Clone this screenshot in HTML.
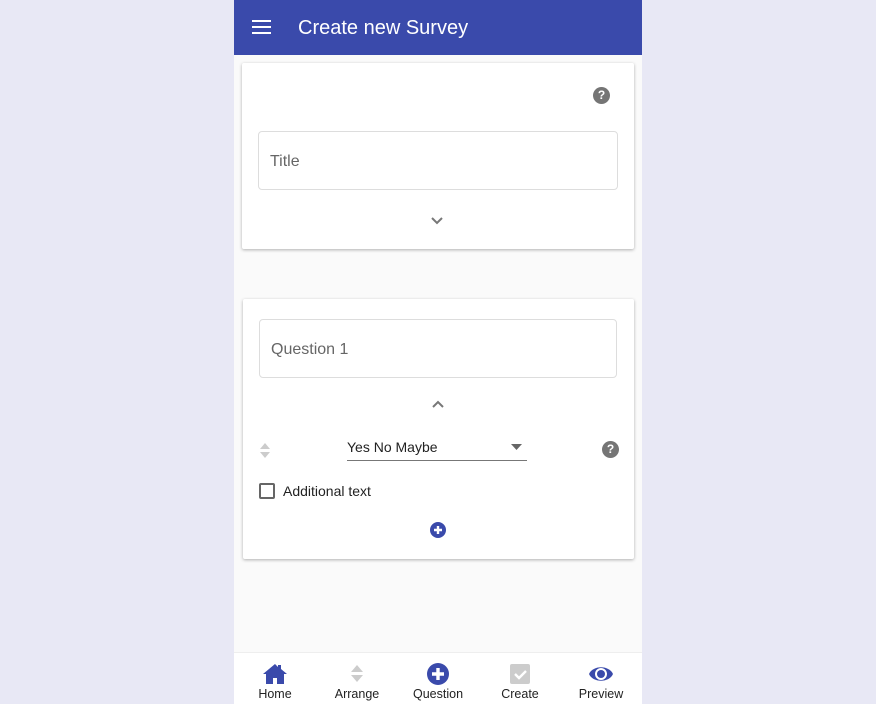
<!DOCTYPE html>
<html><head><meta charset="utf-8"><style>
*{box-sizing:border-box;margin:0;padding:0}
body{width:876px;height:704px;background:#e8e8f5;font-family:"Liberation Sans",sans-serif;position:relative;overflow:hidden}
#app{position:absolute;left:234px;top:0;width:408px;height:704px;background:#fafafa}
.bar{height:55px;background:#3a4aab;color:#fff;position:relative}
.bar .t{position:absolute;left:64px;top:17px;font-size:20px}
.ham{position:absolute;left:18px;width:19px;height:2px;background:#fff}
.card{position:absolute;background:#fff;box-shadow:0 1px 3px rgba(0,0,0,.3);border-radius:2px}
.inp{position:absolute;border:1px solid #ddd;border-radius:4px;color:#666;font-size:16px;padding-left:11px;line-height:59px}
.help{position:absolute;width:17px;height:17px;border-radius:50%;background:#757575;color:#fff;font-size:12px;font-weight:bold;text-align:center;line-height:17px}
.nav{position:absolute;left:0;top:652px;width:408px;height:52px;background:#fff;border-top:1px solid #eee}
.it{position:absolute;top:0;width:80px;text-align:center;font-size:12.5px;color:#222}
.it svg{display:block;margin:10px auto 2px}
</style></head><body>
<div id="app">
<div class="bar"><div class="ham" style="top:20px"></div><div class="ham" style="top:26px"></div><div class="ham" style="top:32px"></div><div class="t">Create new Survey</div></div>
<div class="card" style="left:8px;top:63px;width:392px;height:186px">
<div class="help" style="left:351px;top:24px">?</div>
<div class="inp" style="left:16px;top:68px;width:360px;height:59px">Title</div>
<svg style="position:absolute;left:189px;top:154px" width="12" height="8"><path d="M1 1l5 5 5-5" stroke="#777" stroke-width="2" fill="none"/></svg>
</div>
<div class="card" style="left:9px;top:299px;width:391px;height:260px">
<div class="inp" style="left:16px;top:20px;width:358px;height:59px">Question 1</div>
<svg style="position:absolute;left:189px;top:101px" width="12" height="8"><path d="M1 7l5-5 5 5" stroke="#777" stroke-width="2" fill="none"/></svg>
<svg style="position:absolute;left:16px;top:143px" width="12" height="17"><path d="M1 7L6 1l5 6zM1 10l5 6 5-6z" fill="#ccc"/></svg>
<div style="position:absolute;left:104px;top:140px;width:180px;height:22px;border-bottom:1px solid #777;font-size:14px;color:#222">Yes No Maybe</div>
<svg style="position:absolute;left:268px;top:145px" width="12" height="6"><path d="M0 0h11L5.5 6z" fill="#666"/></svg>
<div class="help" style="left:359px;top:142px">?</div>
<div style="position:absolute;left:16px;top:184px;width:16px;height:16px;border:2px solid #666;border-radius:2px"></div>
<div style="position:absolute;left:40px;top:184px;font-size:14px;color:#222">Additional text</div>
<svg style="position:absolute;left:187px;top:223px" width="16" height="16"><circle cx="8" cy="8" r="8" fill="#3a4aab"/><path d="M8 4v8M4 8h8" stroke="#fff" stroke-width="2.4"/></svg>
</div>
<div class="nav">
<div class="it" style="left:1px"><svg width="26" height="22" viewBox="0 0 26 22"><path d="M13 1L1 11h3v10h7v-6h4v6h7V11h3L19 6V2h-3v2z" fill="#3a4aab"/></svg>Home</div>
<div class="it" style="left:83px"><svg width="14" height="22"><path d="M1 9L7 2l6 7zM1 12l6 7 6-7z" fill="#ccc"/></svg>Arrange</div>
<div class="it" style="left:164px"><svg width="22" height="22"><circle cx="11" cy="11" r="11" fill="#3a4aab"/><path d="M11 5v12M5 11h12" stroke="#fff" stroke-width="3.4"/></svg>Question</div>
<div class="it" style="left:246px"><svg width="20" height="22"><rect x="0" y="1" width="20" height="20" rx="2" fill="#ccc"/><path d="M5 11l4 4 7-7" stroke="#fff" stroke-width="2.4" fill="none"/></svg>Create</div>
<div class="it" style="left:327px"><svg width="26" height="22" viewBox="0 0 26 22"><path d="M1 11C5 2 21 2 25 11 21 20 5 20 1 11z" fill="#3a4aab"/><circle cx="13" cy="11" r="6" fill="#fff"/><circle cx="13" cy="11" r="4" fill="#3a4aab"/></svg>Preview</div>
</div>
</div>
</body></html>
